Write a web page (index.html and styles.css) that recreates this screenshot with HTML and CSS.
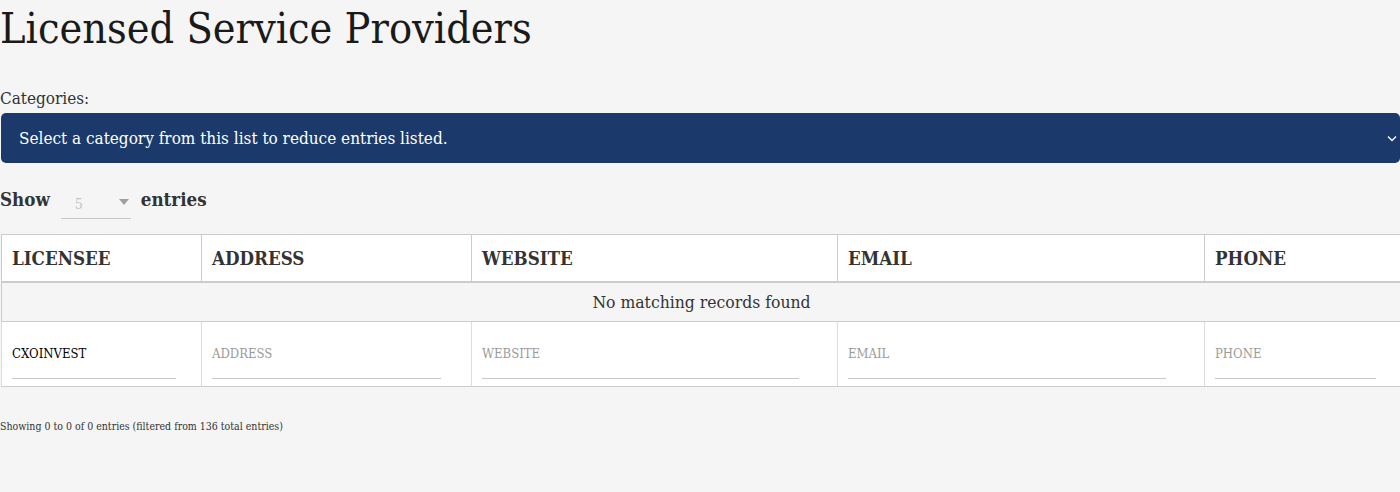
FILE: index.html

```html
<!DOCTYPE html>
<html lang="en">
<head>
  <meta charset="UTF-8" />
  <meta name="viewport" content="width=device-width, initial-scale=1.0" />
  <title>Licensed Service Providers</title>
  <link rel="stylesheet" href="styles.css">
</head>
<body>
  <div class="page">
    <h1>Licensed Service Providers</h1>

    <label class="cat-label" for="category">Categories:</label>
    <div class="cat-wrap">
      <select id="category" class="cat-select">
        <option>Select a category from this list to reduce entries listed.</option>
      </select>
      <svg class="cat-arrow" width="10" height="7" viewBox="0 0 10 7"><path d="M1 1.5 L5 5.5 L9 1.5" fill="none" stroke="#fff" stroke-width="1.3"/></svg>
    </div>

    <div class="length">
      <span>Show</span>
      <div class="length-box">
        <span class="length-val">5</span>
        <span class="length-caret"></span>
      </div>
      <span>entries</span>
    </div>

    <table class="providers">
      <colgroup>
        <col class="c1"><col class="c2"><col class="c3"><col class="c4"><col class="c5">
      </colgroup>
      <thead>
        <tr>
          <th>LICENSEE</th>
          <th>ADDRESS</th>
          <th>WEBSITE</th>
          <th>EMAIL</th>
          <th>PHONE</th>
        </tr>
      </thead>
      <tbody>
        <tr class="empty">
          <td colspan="5">No matching records found</td>
        </tr>
      </tbody>
      <tfoot>
        <tr>
          <td><input class="f1" type="text" value="CXOINVEST"></td>
          <td><input class="f2" type="text" placeholder="ADDRESS"></td>
          <td><input class="f3" type="text" placeholder="WEBSITE"></td>
          <td><input class="f4" type="text" placeholder="EMAIL"></td>
          <td><input class="f5" type="text" placeholder="PHONE"></td>
        </tr>
      </tfoot>
    </table>

    <div class="info">Showing 0 to 0 of 0 entries (filtered from 136 total entries)</div>
  </div>
</body>
</html>
```

FILE: styles.css

```css
html, body {
  margin: 0;
  height: 100%;
  overflow: hidden;
}
body {
  background: #f5f5f5;
  color: #333;
  font-family: "DejaVu Serif Condensed", "Liberation Serif", serif;
}
.page {
  width: 1399px;
  padding-left: 1px;
}
h1 {
  margin: 0 0 0 -1px;
  height: 56px;
  line-height: 56px;
  font-size: 42.8px;
  font-weight: normal;
  color: #1a1a1a;
}
.cat-label {
  display: block;
  margin: 32px 0 0 -1px;
  height: 25px;
  line-height: 20px;
  font-size: 17px;
}
.cat-wrap {
  position: relative;
  height: 50px;
}
.cat-select {
  appearance: none;
  display: block;
  width: 100%;
  height: 50px;
  padding: 0 18px;
  border: none;
  border-radius: 5px;
  background: #1b3a6b;
  color: #fff;
  font-family: inherit;
  font-size: 17px;
}
.cat-arrow {
  position: absolute;
  right: 3px;
  top: 22px;
}
.length {
  display: flex;
  align-items: flex-start;
  height: 71px;
  margin-left: -1px;
  padding-top: 25px;
  box-sizing: border-box;
  font-size: 18.6px;
  font-weight: bold;
  line-height: 24px;
}
.length-box {
  display: flex;
  justify-content: space-between;
  box-sizing: border-box;
  width: 70px;
  height: 31px;
  margin: 0 10px 0 11px;
  padding: 6px 2px 0 14px;
  border-bottom: 1px solid #c8c8c8;
}
.length-val {
  font-size: 14px;
  font-weight: normal;
  line-height: 20px;
  color: #c4c4c4;
}
.length-caret {
  width: 0;
  height: 0;
  margin-top: 5px;
  border-left: 5px solid transparent;
  border-right: 5px solid transparent;
  border-top: 6px solid #a0a0a0;
}
.providers {
  width: 1400px;
  table-layout: fixed;
  border-collapse: collapse;
}
.c1 { width: 200px; }
.c2 { width: 270px; }
.c3 { width: 366px; }
.c4 { width: 367px; }
.c5 { width: 197px; }
th {
  box-sizing: border-box;
  height: 47px;
  padding: 2px 10px 0;
  border: 1px solid #ccc;
  border-bottom: 2px solid #ccc;
  background: #fff;
  text-align: left;
  font-size: 18.6px;
  font-weight: bold;
}
.empty td {
  height: 38px;
  padding: 0;
  border: 1px solid #ccc;
  background: #f5f5f5;
  text-align: center;
  font-size: 17.4px;
  color: #333;
}
tfoot td {
  box-sizing: border-box;
  height: 65px;
  padding: 6px 0 0 10px;
  vertical-align: top;
  border: 1px solid #ccc;
  border-color: #ccc #ddd;
  border-bottom-color: #ccc;
  background: #fff;
}
tfoot input {
  display: block;
  box-sizing: border-box;
  height: 51px;
  padding: 2px 0 0;
  border: none;
  border-bottom: 1px solid #c8c8c8;
  outline: none;
  background: transparent;
  color: #000;
  font-family: inherit;
  font-size: 13px;
}
.f1 { width: 164px; }
.f2 { width: 229px; }
.f3 { width: 317px; }
.f4 { width: 318px; }
.f5 { width: 161px; }
tfoot input::placeholder {
  color: #9a9a9a;
  opacity: 1;
}
.info {
  margin: 31px 0 0 -1px;
  font-size: 10.5px;
  line-height: 16px;
}
```
